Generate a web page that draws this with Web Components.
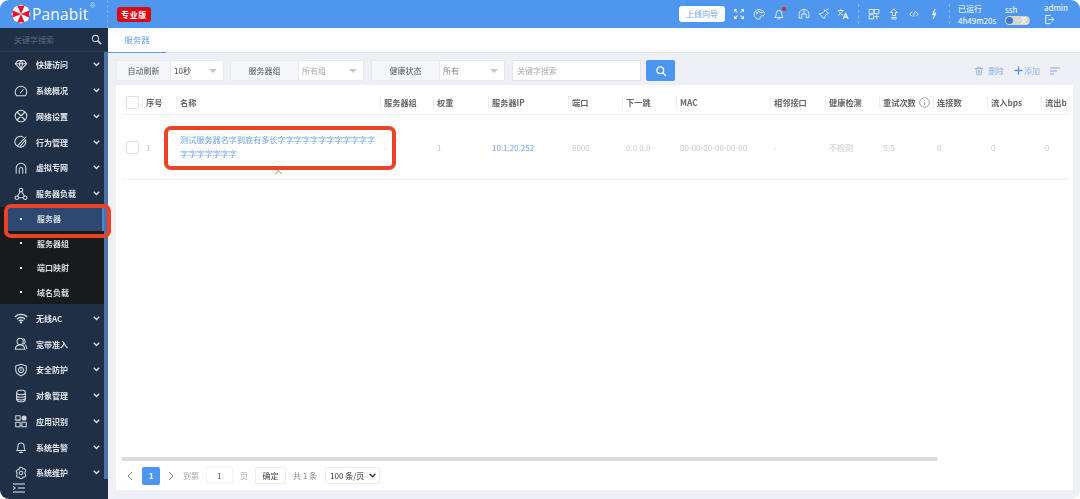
<!DOCTYPE html>
<html lang="zh">
<head>
<meta charset="utf-8">
<title>Panabit</title>
<style>
  html, body { margin: 0; height: 100%; background: #fff; overflow: hidden; }
  body { font-family: "Noto Sans CJK SC", "Liberation Sans", sans-serif; }
</style>
</head>
<body>
<app-shell>
  <top-bar slot="top"></top-bar>
  <side-nav slot="side">
    <nav-item icon="gem" label="快捷访问"></nav-item>
    <nav-item icon="gauge" label="系统概况"></nav-item>
    <nav-item icon="net" label="网络设置"></nav-item>
    <nav-item icon="behave" label="行为管理"></nav-item>
    <nav-item icon="vpn" label="虚拟专网"></nav-item>
    <nav-item icon="lb" label="服务器负载"></nav-item>
    <nav-group>
      <sub-item label="服务器" active></sub-item>
      <sub-item label="服务器组"></sub-item>
      <sub-item label="端口映射"></sub-item>
      <sub-item label="域名负载"></sub-item>
    </nav-group>
    <nav-item icon="wifi" label="无线AC" style="margin-top:2px"></nav-item>
    <nav-item icon="user" label="宽带准入"></nav-item>
    <nav-item icon="shield" label="安全防护"></nav-item>
    <nav-item icon="db" label="对象管理"></nav-item>
    <nav-item icon="apps" label="应用识别"></nav-item>
    <nav-item icon="bell" label="系统告警"></nav-item>
    <nav-item icon="gear" label="系统维护"></nav-item>
  </side-nav>
  <tab-bar slot="main"></tab-bar>
  <filter-bar slot="main"></filter-bar>
  <server-table slot="main"></server-table>
  <red-mark slot="over" style="left:4px;top:204px;width:107px;height:34px"></red-mark>
  <red-mark slot="over" style="left:164px;top:126px;width:232px;height:44px"></red-mark>
</app-shell>

<script>
const stroke = 'fill="none" stroke="currentColor" stroke-linecap="round" stroke-linejoin="round"';
const svg = (w, inner, sw = 1.2, vb = 16) =>
  `<svg width="${w}" height="${w}" viewBox="0 0 ${vb} ${vb}" ${stroke} stroke-width="${sw}">${inner}</svg>`;

const ICONS = {
  gem: '<path d="M4.500 3h7L14.500 6.500 8 13.500 1.500 6.500z"/><path d="M1.500 6.500h13M6 6.500 8 13.500 10 6.500 8 3 6 6.500"/>',
  gauge: '<path d="M3 13.500a6.600 6.600 0 1 1 10 0z"/><path d="M7.500 10 10.500 6.500"/>',
  net: '<circle cx="8" cy="8" r="6.600"/><path d="M4 4 12 12M12 4 4 12" stroke-width="1.600"/>',
  behave: '<path d="M13 5.500A6.200 6.200 0 1 1 10.500 2.500"/><path d="M4 12.500 13.500 2.500M7 13l6-7"/>',
  vpn: '<path d="M2.500 14V8a5.500 5.500 0 0 1 11 0v6"/><path d="M6 14V9.500a2 2 0 0 1 4 0V14"/>',
  lb: '<circle cx="8" cy="3.500" r="2"/><circle cx="3.200" cy="12.200" r="2"/><circle cx="12.800" cy="12.200" r="2"/><path d="M7 5.300 4.200 10.400M9 5.300l2.800 5.100M5.200 12.200h5.600"/>',
  wifi: '<path d="M1.500 6.300C5 3 11 3 14.500 6.300M3.800 8.800c2.400-2 6-2 8.400 0M6 11c1.200-.8 2.800-.8 4 0" stroke-width="1.600"/><circle cx="8" cy="13" r=".7"/>',
  user: '<circle cx="7" cy="5" r="3.500"/><path d="M1.500 14c0-3 2-5 5.500-5s5 2 5.500 5zM11 2a3.500 3.500 0 0 1 0 6M13 9c1 1 1.500 2.500 1.500 4"/>',
  shield: '<path d="M8 1.500 14 3.500V8c0 3.500-3 5.500-6 6.500C5 13.500 2 11.500 2 8V3.500z"/><path d="M8 5a3 3 0 1 0 .01 0zM8 6.500V8.500"/>',
  db: '<rect x="3" y="1.500" width="10" height="13" rx="3"/><path d="M3 5.500c2 1.300 8 1.300 10 0M3 8.500c2 1.300 8 1.300 10 0M3 11.500c2 1.300 8 1.300 10 0"/>',
  apps: '<rect x="2" y="2" width="5" height="5"/><rect x="2" y="9.500" width="5" height="5"/><rect x="9" y="9.500" width="5" height="5"/><circle cx="11.500" cy="4.500" r="2.300" fill="currentColor"/>',
  bell: '<path d="M3 12h10c-1.300-1.300-1.500-2.500-1.500-5a3.500 3.500 0 0 0-7 0c0 2.500-.2 3.700-1.500 5z"/><path d="M6.500 14.200h3" stroke-width="1.500"/>',
  gear: '<circle cx="8" cy="8" r="2"/><path d="M8 1.500a2 2 0 0 1 2 2 2 2 0 0 1 3 .8 2 2 0 0 1-.5 2.700 2 2 0 0 1 0 2 2 2 0 0 1 .5 2.700 2 2 0 0 1-3 .8 2 2 0 0 1-4 0 2 2 0 0 1-3-.8A2 2 0 0 1 3.500 10a2 2 0 0 1 0-2A2 2 0 0 1 3 5.300a2 2 0 0 1 3-.8 2 2 0 0 1 2-3z"/>'
};

// small helper so each class only writes its markup and styles
class Base extends HTMLElement {
  render(html) {
    if (!this.shadowRoot) this.attachShadow({ mode: 'open' });
    this.shadowRoot.innerHTML = html;
  }
}

class AppShell extends Base {
  connectedCallback() {
    this.render(`
      <style>
        :host { display: grid; grid-template-columns: 108px 1fr; grid-template-rows: 28px 1fr;
          width: 1080px; height: 499px; position: relative; overflow: hidden;
          border-radius: 9px; background: #eef0f5; filter: blur(.35px); }
        .top { grid-column: 1 / 3; }
        .main { display: flex; flex-direction: column; min-width: 0; min-height: 0; }
      </style>
      <div class="top"><slot name="top"></slot></div>
      <slot name="side"></slot>
      <div class="main"><slot name="main"></slot></div>
      <slot name="over"></slot>`);
  }
}

class TopBar extends Base {
  connectedCallback() {
    const ic = (inner, m = 0) => `<span class="ic" style="margin-left:${m}px">${svg(12, inner, 1.200)}</span>`;
    this.render(`
      <style>
        :host { display: flex; align-items: center; height: 28px; background: #4e96ee; color: #fff;
          font-size: 8px; box-sizing: border-box; }
        .logo { width: 108px; height: 100%; display: flex; align-items: center; padding-left: 11px;
          box-sizing: border-box; border-right: 1px dashed #7fb2f2; position: relative; }
        .name { font: 15.500px "Open Sans", "Liberation Sans", sans-serif; margin-left: 1px; letter-spacing: .2px; }
        .reg { position: absolute; left: 90px; top: 2px; font: 7px "Liberation Sans", sans-serif; color: #cfe2fb; }
        .badge { margin-left: 9px; width: 34px; height: 15px; background: #dc0710; border-radius: 3px;
          font-weight: 700; line-height: 15px; text-align: center; letter-spacing: .6px; }
        .spacer { flex: 1; }
        .guide { width: 46px; height: 16px; background: #fff; border-radius: 3px; color: #6ea3f0;
          text-align: center; line-height: 16px; font-size: 8px; margin-right: 4px; }
        .ic { width: 20px; display: flex; justify-content: center; position: relative; opacity: .88; }
        .dot { position: absolute; left: 13px; top: -1px; width: 3.500px; height: 3.500px; border-radius: 50%; background: #f01616; }
        .sep { width: 0; height: 20px; border-left: 1px dashed #8dbbf4; margin: 0 5px; }
        .status { display: flex; flex-direction: column; gap: 1px; font-size: 8px; line-height: 11px; }
        .status.up { width: 47px; padding-left: 3px; }
        .status.ssh { width: 39px; align-items: flex-start; }
        .status.admin { width: 36px; }
        .toggle { width: 25px; height: 9px; background: #d9d5cf; border-radius: 5px; position: relative;
          font-size: 6.500px; line-height: 9px; text-align: right; padding-right: 3px; box-sizing: border-box; color: #fff; }
        .toggle::before { content: ""; position: absolute; left: 1px; top: 1px; width: 7px; height: 7px;
          border-radius: 50%; background: #3f78c8; }
      </style>
      <div class="logo">
        <svg width="20" height="20" viewBox="0 0 20 20">
          <path fill="#fff" d="M10 .5 16.700 3.300 19.500 10 16.700 16.700 10 19.500 3.300 16.700 .5 10 3.300 3.300z"/>
          <path fill="#e8112d" d="M10 10 6.200 1.200Q10 2.400 13.800 1.200zM10 10 18.800 6.200Q17.600 10 18.800 13.800zM10 10 13.800 18.800Q10 17.600 6.200 18.800zM10 10 1.200 13.800Q2.400 10 1.200 6.200z"/>
        </svg>
        <span class="name">Panabit</span><span class="reg">®</span>
      </div>
      <span class="badge">专业版</span>
      <span class="spacer"></span>
      <span class="guide">上线向导</span>
      ${ic('<path d="M2 2h2.500M2 2v2.500M2 2l3.500 3.500M14 2h-2.500M14 2v2.500M14 2l-3.500 3.500M2 14h2.500M2 14v-2.500M2 14l3.500-3.500M14 14h-2.500M14 14v-2.500M14 14l-3.500-3.500" stroke-width="1.500"/>')}
      ${ic('<path d="M8 2a6.500 6.500 0 1 0 0 13c2 0 1.500-1.500 1.500-2.500 0-1.500 1-2 2.500-2s3-.5 3-3C15 4.500 12 2 8 2z"/><circle cx="5" cy="6.500" r=".8"/><circle cx="8" cy="5" r=".8"/><circle cx="11" cy="6" r=".8"/>')}
      <span class="ic">${svg(12, '<path d="M2.500 12.500h11c-1.500-1.500-1.800-3-1.800-5.500a3.700 3.700 0 0 0-7.400 0c0 2.500-.3 4-1.800 5.500zM6.500 14.500h3"/>', 1.200)}<span class="dot"></span></span>
      ${ic('<path d="M1.500 13V7.500a6.500 5.500 0 0 1 13 0V13h-3.500V8h-6v5zM8 2.500V8"/>', 5)}
      ${ic('<path d="M2 8 8 14 10.500 9 14 7 9 2.500C8.500 5.500 5.500 7.500 2 8z"/><path d="M11.500 2.500 14 1"/>')}
      ${ic('<path d="M1.500 3.500h7M5 2v1.500M7.500 3.500C7 6 4.500 8.500 2 9.500M3 5.500c1 2 3 3.500 4.500 4" /><path d="M8.500 14l3-7 3 7M9.500 12h4" stroke-width="1.700"/>', -1)}
      <span class="sep"></span>
      ${ic('<rect x="2" y="2" width="5.500" height="5.500"/><rect x="9" y="2" width="5.500" height="5.500"/><rect x="2" y="9" width="5.500" height="5.500"/><path d="M9 11.500h5.500M11.500 9v5.500"/>')}
      ${ic('<path d="M8 1.500 12.500 6H10v4H6V6H3.500zM5 12.500h6M5 14.500h6"/>')}
      ${ic('<path d="M5.500 5 2.500 8.200 5 10.800M10.500 5l3 3.200L11 10.800M9 5 7 11"/>')}
      ${ic('<path d="M9 2 6 9h2.500L7 14.500 10.500 7H8z" fill="currentColor"/>')}
      <span class="sep"></span>
      <div class="status up"><span>已运行</span><span>4h49m20s</span></div>
      <div class="status ssh"><span>ssh</span><span class="toggle">关</span></div>
      <div class="status admin"><span>admin</span>
        <span>${svg(11, '<path d="M9 2H2.500v12H9M7 8h7M11.500 5 14.500 8 11.500 11"/>', 1.300)}</span></div>`);
  }
}

class SideNav extends Base {
  connectedCallback() {
    this.render(`
      <style>
        :host { display: flex; flex-direction: column; width: 108px; min-height: 0; background: #1e2f46; color: #e4e6ea;
          font-size: 8px; font-weight: 700; position: relative; }
        .search { height: 24px; flex: none; display: flex; align-items: center; justify-content: space-between;
          padding: 0 6px 0 14px; color: #5d6b7e; font-weight: 400; border-bottom: 1px solid #2b3c52; box-sizing: border-box; }
        .search svg { color: #c9d0da; }
        .list { flex: 1; padding-right: 4px; min-height: 0; background: linear-gradient(#4d74aa, #4d74aa) right top / 4px 100% no-repeat; }
        .foot { height: 20px; flex: none; display: flex; align-items: center; padding: 0 0 2px 13px; box-sizing: border-box; }
      </style>
      <div class="search"><span>关键字搜索</span>${svg(11, '<circle cx="6.500" cy="6.500" r="4.500"/><path d="M10 10l4 4" stroke-width="2.400"/>', 1.500)}</div>
      <div class="list"><slot></slot></div>
      <div class="foot">
        <svg width="12" height="10" viewBox="0 0 12 10" fill="none" stroke="#eceef1" stroke-width="1.200">
          <path d="M0 1h12M5 5h7M0 9h12"/><path d="M0 3.500 2.500 5 0 6.500" stroke-width="1"/>
        </svg>
      </div>`);
  }
}

class NavItem extends Base {
  connectedCallback() {
    this.render(`
      <style>
        :host { display: flex; align-items: center; height: 25.750px; box-sizing: border-box; padding-left: 14px; }
        .i { width: 14px; height: 14px; display: flex; color: #d6dae0; }
        .t { margin-left: 8px; flex: 1; white-space: nowrap; }
        .c { width: 11px; display: flex; }
      </style>
      <span class="i">${svg(14, ICONS[this.getAttribute('icon')], 1.200)}</span>
      <span class="t">${this.getAttribute('label')}</span>
      <span class="c"><svg width="7" height="5" viewBox="0 0 7 5" fill="none" stroke="#dfe3e8" stroke-width="1.400"><path d="M.8 .8 3.500 3.500 6.200 .8"/></svg></span>`);
  }
}

class NavGroup extends Base {
  connectedCallback() {
    this.render(`<style>:host { display: block; height: 97px; background: #191a1c; }</style><slot></slot>`);
  }
}

class SubItem extends Base {
  connectedCallback() {
    const on = this.hasAttribute('active');
    this.render(`
      <style>
        :host { display: flex; align-items: center; height: 24.500px; padding-left: 20px; box-sizing: border-box; color: #d9dce0;
          ${on ? 'background: #2d4971; margin-left: 6px; padding-left: 14px; border-right: 2px solid #4f86cf;' : ''} }
        i { width: 2px; height: 2px; background: #f0f0f0; margin-right: 15px; flex: none; }
        span { white-space: nowrap; }
      </style>
      <i></i><span>${this.getAttribute('label')}</span>`);
  }
}

class TabBar extends Base {
  connectedCallback() {
    this.render(`
      <style>
        :host { display: flex; flex: none; height: 25px; background: #fff; border-bottom: 1px solid #e1e7ef; box-sizing: border-box; font-size: 8.500px; }
        .tab { width: 58px; height: 25px; box-sizing: border-box; text-align: center; line-height: 22px; color: #6ea3ee; border-bottom: 1px solid #5a9cf0; }
      </style>
      <div class="tab">服务器</div>`);
  }
}

class FilterBar extends Base {
  connectedCallback() {
    const group = (label, lw, value, sw, color = '#444', m = 0) => `
      <div class="grp" style="margin-left:${m}px"><span class="lb" style="width:${lw}px">${label}</span>
        <span class="sel" style="width:${sw}px;color:${color}">${value}<b></b></span></div>`;
    this.render(`
      <style>
        :host { display: flex; flex: none; align-items: center; height: 32px; padding: 7px 0 4px 8px; box-sizing: border-box;
          font-size: 8px; color: #555; gap: 6px; }
        .grp { display: flex; height: 21px; border: 1px solid #e7eaf0; box-sizing: border-box; background: #fff; }
        .lb { background: #f5f6f9; text-align: center; line-height: 19px; border-right: 1px solid #e7eaf0; box-sizing: border-box; }
        .sel { position: relative; padding-left: 3px; line-height: 20px; box-sizing: border-box; }
        .sel b { position: absolute; right: 6px; top: 8px; border: 4px solid transparent; border-top: 4px solid #c4c7cc; border-bottom: 0; }
        .input { width: 129px; height: 21px; background: #fff; border: 1px solid #e2e5ea; box-sizing: border-box; color: #aaa; line-height: 19px; padding-left: 4px; margin-left: 1px; }
        .go { width: 29px; height: 21px; background: #4b97f0; border-radius: 2px; display: flex; align-items: center; justify-content: center; color: #fff; margin-left: -1px; }
        .acts { margin-left: auto; margin-right: 20px; display: flex; align-items: center; color: #8db2e8; height: 21px; }
        .acts svg { display: block; }
      </style>
      ${group('自动刷新', 54, '10秒', 52)}
      ${group('服务器组', 68, '所有组', 64, '#aaa')}
      ${group('健康状态', 68, '所有', 64, '#888', 1)}
      <span class="input">关键字搜索</span>
      <span class="go">${svg(12, '<circle cx="7" cy="7" r="4.500"/><path d="M10.500 10.500 14 14"/>', 1.700)}</span>
      <div class="acts">
        ${svg(10, '<path d="M2 4h12M5.500 4V2.500h5V4M3.500 4l1 10h7l1-10M7 6.500v5M9 6.500v5"/>', 1.300)}
        <span style="margin:0 10px 0 4px">删除</span>
        <svg width="9" height="9" viewBox="0 0 9 9" stroke="#5f93e0" stroke-width="1.300"><path d="M4.500 .5v8M.5 4.500h8"/></svg>
        <span style="margin:0 10px 0 1px">添加</span>
        <svg width="10" height="8" viewBox="0 0 10 8" stroke="#7ba6e6" stroke-width="1.100"><path d="M0 1h10M0 4h7M0 7h4"/></svg>
      </div>`);
  }
}

class ServerTable extends Base {
  connectedCallback() {
    const cols = [
      ['序号', 34], ['名称', 204], ['服务器组', 53], ['权重', 55], ['服务器IP', 80], ['端口', 54],
      ['下一跳', 54], ['MAC', 94], ['相邻接口', 55], ['健康检测', 54], ['重试次数', 54],
      ['连接数', 54], ['流入bps', 54], ['流出bps', 54]
    ];
    const row = ['1', '', '-', '1', '10.1.20.252', '8000', '0.0.0.0', '00-00-00-00-00-00', '-', '不检测', '5/5', '0', '0', '0'];
    const grid = '20px ' + cols.map(c => c[1] + 'px').join(' ');
    const head = cols.map(c => {
      const info = c[0] === '重试次数' ? '<svg class="inf" width="11" height="11" viewBox="0 0 11 11" fill="none" stroke="#777" stroke-width=".7"><circle cx="5.500" cy="5.500" r="4.800"/><path d="M5.500 5v3M5.500 3v1"/></svg>' : '';
      return `<div class="h"><span>${c[0]}</span>${info}</div>`;
    }).join('');
    const body = row.map((v, i) => {
      if (i === 1) return `<div class="c name"><span class="lnk">测试服务器名字到底有多长字字字字字字字字字字字字字字字字字字字</span><span class="more"></span></div>`;
      return `<div class="c ${i === 4 ? 'ip' : ''}">${v}</div>`;
    }).join('');
    this.render(`
      <style>
        :host { display: flex; flex-direction: column; flex: 1; min-height: 0; margin: 0 7px 9px 8px; padding: 0 6px; background: #fff;
          font-size: 8px; color: #666; }
        .wrap { flex: 1; overflow: hidden; min-height: 0; }
        .hr, .br { display: grid; grid-template-columns: ${grid}; width: max-content; }
        .hr { align-items: end; padding-bottom: 5px; height: 24px; border-bottom: 1px solid #f0f1f3; font-weight: 700; font-size: 8.200px; }
        .hr .h { border-left: 1px solid #eceef1; padding-left: 3px; height: 13px; line-height: 13px; display: flex; align-items: center; gap: 3px; white-space: nowrap; overflow: hidden; }
        .br { height: 64px; border-bottom: 1px solid #f0f1f3; align-items: center; color: #c9c9c9; }
        .c { padding-left: 4px; white-space: nowrap; }
        .ip { color: #6ea3f2; }
        .name { white-space: normal; position: relative; line-height: 13.600px; font-size: 8.150px; }
        .lnk { color: #6ea3f2; display: block; padding-right: 3px; }
        .more { position: absolute; left: 95px; top: 28px; width: 14px; height: 14px; border: 1px solid #e8e8e8; border-radius: 50%; box-sizing: border-box; background: #fff; }
        .more::before { content: ""; position: absolute; left: 4px; top: 9px; width: 4px; height: 4px; border-left: 1px solid #aaa; border-top: 1px solid #aaa; transform: rotate(45deg); }
        .cb { width: 13px; height: 13px; border: 1px solid #dfe1e5; border-radius: 2px; box-sizing: border-box; margin-left: 4px; background: #fff; }
        .inf { flex: none; }
        .sb { flex: none; height: 4px; background: #fff; }
        .sb i { display: block; width: 815px; height: 4px; background: #dcdcdc; }
      </style>
      <div class="wrap">
        <div class="hr"><span class="cb"></span>${head}</div>
        <div class="br"><span class="cb"></span>${body}</div>
      </div>
      <div class="sb"><i></i></div>
      <page-nav></page-nav>`);
  }
}

class PageNav extends Base {
  connectedCallback() {
    this.render(`
      <style>
        :host { display: flex; flex: none; align-items: center; height: 29px; font-size: 8px; color: #888; }
        .ar { width: 16px; display: flex; justify-content: center; }
        .cur { width: 18px; height: 18px; background: #4b97f0; color: #fff; border-radius: 2px; text-align: center; line-height: 18px; margin: 0 3px 0 4px; font-weight: 700; }
        .ip { width: 27px; height: 17px; border: 1px solid #f3f3f3; box-sizing: border-box; text-align: center; line-height: 15px; color: #555; margin: 0 7px; }
        .ok { width: 31px; height: 17px; border: 1px solid #eceef1; box-sizing: border-box; border-radius: 2px; text-align: center; line-height: 15px; color: #444; margin: 0 7px; }
        .sz { width: 55px; height: 17px; border: 1px solid #eceef1; box-sizing: border-box; border-radius: 2px; display: flex; align-items: center; justify-content: space-between; padding: 0 3px 0 4px; color: #333; margin-left: 8px; }
        span { white-space: nowrap; }
      </style>
      <span class="ar"><svg width="6" height="10" viewBox="0 0 6 10" fill="none" stroke="#777" stroke-width="1"><path d="M5 1 1 5 5 9"/></svg></span>
      <span class="cur">1</span>
      <span class="ar"><svg width="6" height="10" viewBox="0 0 6 10" fill="none" stroke="#777" stroke-width="1"><path d="M1 1 5 5 1 9"/></svg></span>
      <span style="margin-left:4px;color:#aaa">到第</span>
      <span class="ip">1</span>
      <span style="color:#aaa">页</span>
      <span class="ok">确定</span>
      <span>共 1 条</span>
      <span class="sz">100 条/页<svg width="7" height="5" viewBox="0 0 7 5" fill="none" stroke="#333" stroke-width="1.300"><path d="M.6 .8 3.500 3.800 6.400 .8"/></svg></span>`);
  }
}

class RedMark extends Base {
  connectedCallback() {
    this.render(`<style>:host { display: block; position: absolute; box-sizing: border-box; border: 4px solid #ec4226; border-radius: 7px; pointer-events: none; }</style>`);
  }
}

customElements.define('app-shell', AppShell);
customElements.define('top-bar', TopBar);
customElements.define('side-nav', SideNav);
customElements.define('nav-item', NavItem);
customElements.define('nav-group', NavGroup);
customElements.define('sub-item', SubItem);
customElements.define('tab-bar', TabBar);
customElements.define('filter-bar', FilterBar);
customElements.define('server-table', ServerTable);
customElements.define('page-nav', PageNav);
customElements.define('red-mark', RedMark);
</script>
</body>
</html>
